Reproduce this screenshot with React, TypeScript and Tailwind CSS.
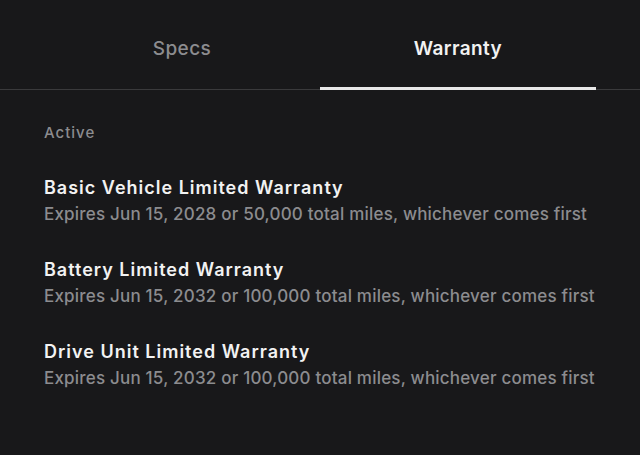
import React, { useState } from 'react';

const WARRANTIES = [
  {
    title: 'Basic Vehicle Limited Warranty',
    detail: 'Expires Jun 15, 2028 or 50,000 total miles, whichever comes first',
  },
  {
    title: 'Battery Limited Warranty',
    detail: 'Expires Jun 15, 2032 or 100,000 total miles, whichever comes first',
  },
  {
    title: 'Drive Unit Limited Warranty',
    detail: 'Expires Jun 15, 2032 or 100,000 total miles, whichever comes first',
  },
];

export default function App() {
  const [tab, setTab] = useState<'specs' | 'warranty'>('warranty');

  return (
    <div className="min-h-screen w-full bg-[#18181a] font-['Inter','Noto_Sans',sans-serif] antialiased">
      {/* Tabs */}
      <div className="flex px-[44px] border-b border-[#3a3a3c]">
        {(['specs', 'warranty'] as const).map((key) => (
          <button
            key={key}
            onClick={() => setTab(key)}
            className={
              tab === key
                ? 'flex-1 h-[90px] pt-[37px] text-[19px] leading-[24px] tracking-[0.4px] font-semibold text-[#f2f2f2] border-b-[3px] border-[#e8e8e8] flex justify-center items-start -mb-px'
                : 'flex-1 h-[90px] pt-[37px] text-[19px] leading-[24px] tracking-[0.4px] font-medium text-[#8c8c8f] border-b-[3px] border-transparent flex justify-center items-start -mb-px'
            }
          >
            {key === 'specs' ? 'Specs' : 'Warranty'}
          </button>
        ))}
      </div>

      {/* Content */}
      <div className="px-[44px] pt-[33px] flex flex-col">
        <div className="text-[15px] leading-[20px] tracking-[1px] font-medium text-[#8c8c8f]">Active</div>
        <div className="mt-[33px] flex flex-col gap-[33px]">
          {WARRANTIES.map((w) => (
            <div key={w.title} className="flex flex-col gap-[3px]">
              <div className="text-[18px] leading-[24px] tracking-[1px] font-semibold text-[#f2f2f2]">{w.title}</div>
              <div className="text-[17px] leading-[22px] tracking-[0.2px] font-medium text-[#8c8c8f]">{w.detail}</div>
            </div>
          ))}
        </div>
      </div>
    </div>
  );
}
